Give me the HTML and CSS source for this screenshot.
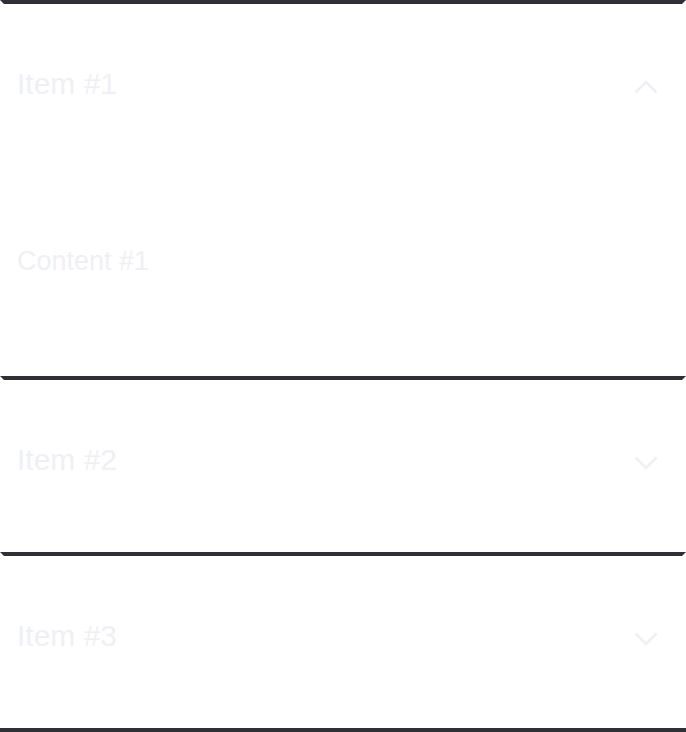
FILE: index.html
```html
<!DOCTYPE html>
<html lang="en">
<head>
<meta charset="utf-8">
<title>Accordion</title>
<link rel="stylesheet" href="styles.css">
</head>
<body>
<div class="accordion">
  <section class="item">
    <div class="header">
      <span class="title">Item #1</span>
      <svg class="chev" width="24" height="14" viewBox="0 0 24 14"><polyline points="1.5,12.5 12,2 22.5,12.5" fill="none" stroke="#efeff4" stroke-width="2.5"/></svg>
    </div>
    <div class="content">Content #1</div>
  </section>
  <section class="item">
    <div class="header">
      <span class="title">Item #2</span>
      <svg class="chev" width="24" height="14" viewBox="0 0 24 14"><polyline points="1.5,1.5 12,12 22.5,1.5" fill="none" stroke="#efeff4" stroke-width="2.5"/></svg>
    </div>
  </section>
  <section class="item">
    <div class="header">
      <span class="title">Item #3</span>
      <svg class="chev" width="24" height="14" viewBox="0 0 24 14"><polyline points="1.5,1.5 12,12 22.5,1.5" fill="none" stroke="#efeff4" stroke-width="2.5"/></svg>
    </div>
  </section>
</div>
</body>
</html>
```
FILE: styles.css
```css
html, body {
  margin: 0;
  padding: 0;
  background: #ffffff;
}
body {
  font-family: "Liberation Sans", Arial, sans-serif;
}
.accordion {
  border-bottom: 4px solid #2f3037;
}
.item {
  border-top: 4px solid #2f3037;
  border-left: 4px solid #ffffff;
  border-right: 4px solid #ffffff;
}
.header {
  height: 172px;
  box-sizing: border-box;
  display: flex;
  justify-content: space-between;
  align-items: flex-start;
  padding: 0 24px 0 13px;
}
.title {
  display: block;
  margin-top: 63px;
  font-size: 30px;
  line-height: 34px;
  color: #efeff4;
}
.chev {
  display: block;
  margin-top: 76px;
}
.content {
  height: 200px;
  box-sizing: border-box;
  padding: 68px 13px 0;
  font-size: 27px;
  line-height: 34px;
  color: #efeff4;
}
```
